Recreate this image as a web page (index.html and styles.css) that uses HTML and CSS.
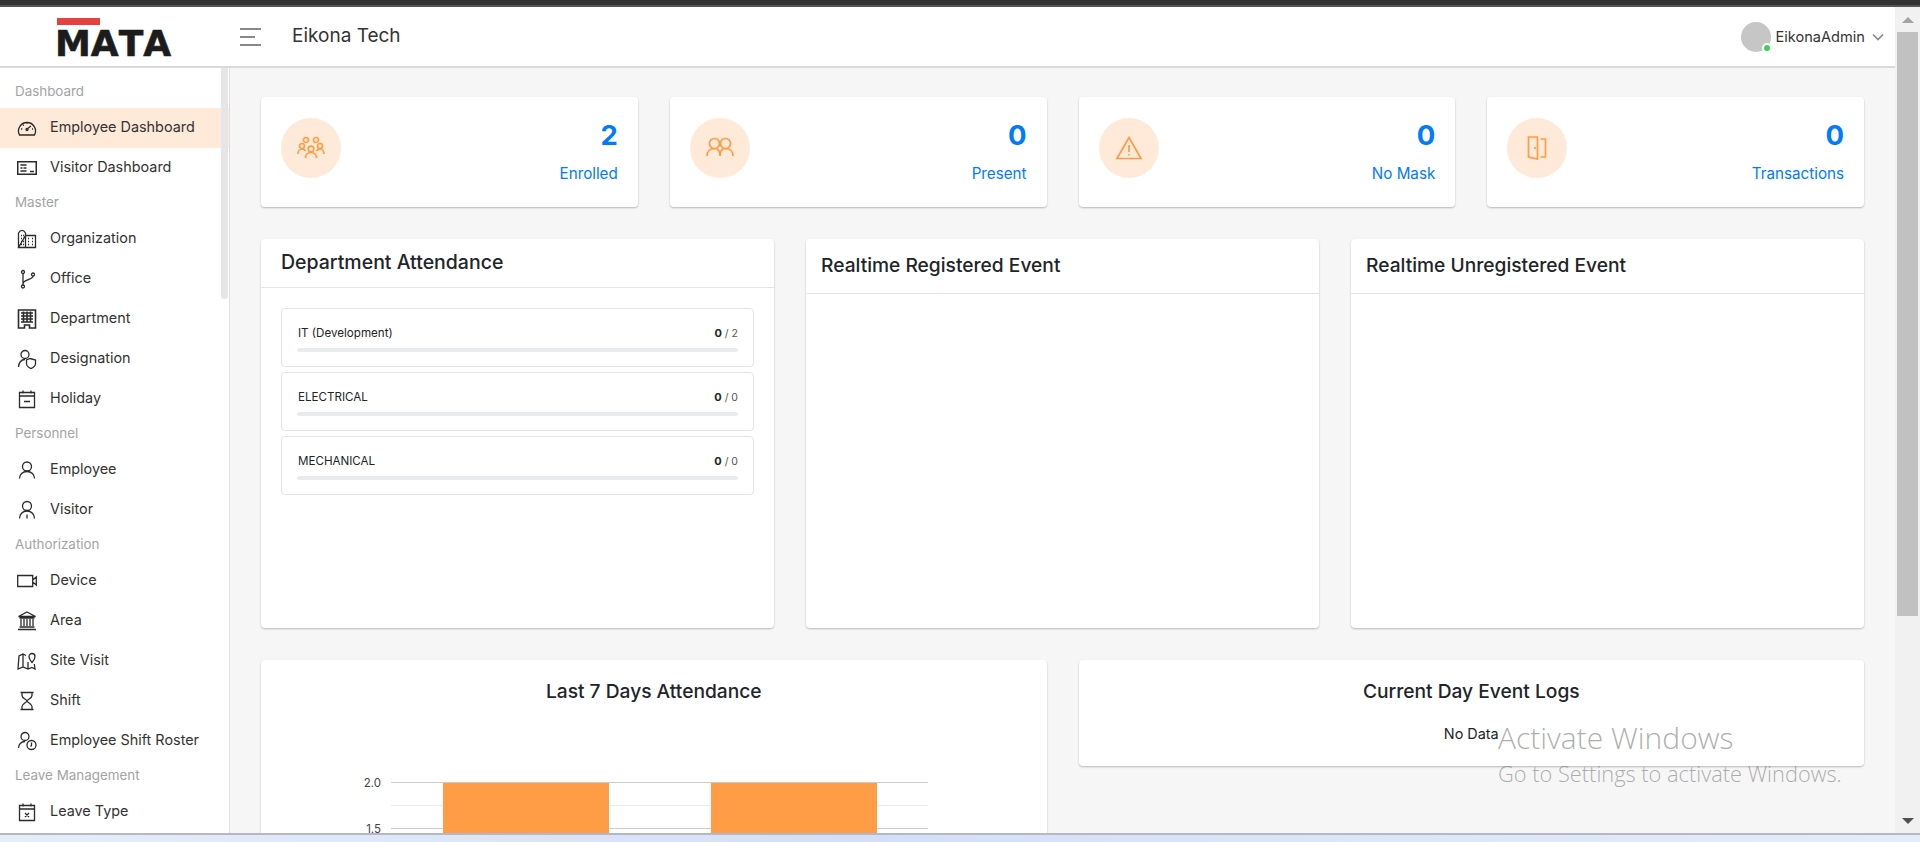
FILE: index.html
```html
<!DOCTYPE html>
<html lang="en">
<head>
    <meta charset="UTF-8">
    <meta name="viewport" content="width=device-width, initial-scale=1.0">
    <title>Eikona Tech</title>
    <link rel="stylesheet" href="styles.css">
</head>
<body>
    <div class="window-top"></div>
    <div class="window">
        <div class="page">
            <header class="topbar">
                <div class="brand">
                    <div class="brand-bar"></div>
                    <div class="brand-name">MATA</div>
                </div>
                <div class="burger"><span></span><span class="short"></span><span></span></div>
                <div class="company">Eikona Tech</div>
                <div class="user">
                    <div class="avatar"><span class="online"></span></div>
                    <span class="user-name">EikonaAdmin</span>
                    <svg class="chevron" viewBox="0 0 12 8"><path d="M1 1.5l5 5 5-5"/></svg>
                </div>
            </header>
            <div class="content">
                <nav class="sidebar">
                    <div class="side-thumb"></div>
                    <div class="side-label">Dashboard</div>
                    <a class="side-item active">
                        <svg class="side-icon" viewBox="0 0 20 20"><path d="M2.500 17a8.500 8.500 0 1 1 15 0zM10 11l4-3M4 11h1.200M6 6.800l.8.8M10 4.500v1.200M15 11h1"/><circle cx="10" cy="11.500" r="1"/></svg>
                        Employee Dashboard
                    </a>
                    <a class="side-item">
                        <svg class="side-icon side-icon-bold" viewBox="0 0 20 20"><path d="M.7 3.700h18.600v12.600H.7zM3.500 7h6M3.500 10h2M6.500 10h3M3.500 13h6M13 13.500h4"/></svg>
                        Visitor Dashboard
                    </a>
                    <div class="side-label">Master</div>
                    <a class="side-item">
                        <svg class="side-icon" viewBox="0 0 20 20"><path d="M1.500 18.500V4c2-3.500 5-3.500 7 0v14.500M8.500 6.500h10v12H1.500zM4 6.500h1M6 6.500h1M4 9.500h1M6 9.500h1M4 12.500h1M6 12.500h1M4 15.500h1M6 15.500h1M11 9.500h1M15 9.500h1M11 12.500h1M15 12.500h1M11 15.500h1M15 15.500h1"/></svg>
                        Organization
                    </a>
                    <a class="side-item">
                        <svg class="side-icon" viewBox="0 0 20 20"><circle cx="6" cy="3" r="1.500"/><circle cx="6" cy="17.500" r="1.500"/><circle cx="16" cy="5.500" r="1.500"/><path d="M6 4.500v11.500M16 7c0 4-10 3.500-10 8"/></svg>
                        Office
                    </a>
                    <a class="side-item">
                        <svg class="side-icon side-icon-bold" viewBox="0 0 20 20"><path d="M1.500 1h17v18h-6v-3h-5v3h-6zM4 4h12M4 7h12M4 10h12M4 13h12M6.500 2.500v11M10 2.500v11M13.500 2.500v11"/></svg>
                        Department
                    </a>
                    <a class="side-item">
                        <svg class="side-icon" viewBox="0 0 20 20"><circle cx="8" cy="5.500" r="4"/><path d="M1.500 18c0-4 2.500-7.500 6.500-7.500M13 9.500l5.500 1.500v3.500c0 2.500-3 4.500-4.500 5-1.500-.5-4.500-2.500-4.500-5V11z"/></svg>
                        Designation
                    </a>
                    <a class="side-item">
                        <svg class="side-icon" viewBox="0 0 20 20"><path d="M2.500 3.500h15v15h-15zM2.500 7h15M6 1.500v3M14 1.500v3M7 12.500h6"/></svg>
                        Holiday
                    </a>
                    <div class="side-label">Personnel</div>
                    <a class="side-item">
                        <svg class="side-icon" viewBox="0 0 20 20"><circle cx="10" cy="6.500" r="4.500"/><path d="M2.500 18.500c0-4 3-7 7.500-7s7.500 3 7.500 7"/></svg>
                        Employee
                    </a>
                    <a class="side-item">
                        <svg class="side-icon" viewBox="0 0 20 20"><circle cx="10" cy="6" r="4.500"/><path d="M2.500 18.500c0-4 3-7.500 7.500-7.500s7.500 3.500 7.500 7.500M10 14.500v4"/></svg>
                        Visitor
                    </a>
                    <div class="side-label">Authorization</div>
                    <a class="side-item">
                        <svg class="side-icon" viewBox="0 0 20 20"><path d="M.7 4.500h15v11H.7zM15.700 9l3.600-3v8l-3.600-3"/></svg>
                        Device
                    </a>
                    <a class="side-item">
                        <svg class="side-icon" viewBox="0 0 20 20"><path d="M10 1l8.500 4.500h-17zM2.500 7h15M4 8v7M7 8v7M10 8v7M13 8v7M16 8v7M2.500 16h15M1 18.500h18"/></svg>
                        Area
                    </a>
                    <a class="side-item">
                        <svg class="side-icon" viewBox="0 0 20 20"><path d="M9 4.500L6 3 2 5 1 18l5-2 5 2 4-1.500 3 1.500-.7-5M6 3v13M11 11v7"/><path d="M15 11.500c-1.500-2-3-3.500-3-6a3 3 0 0 1 6 0c0 2.500-1.500 4-3 6z"/></svg>
                        Site Visit
                    </a>
                    <a class="side-item">
                        <svg class="side-icon" viewBox="0 0 20 20"><path d="M3.500 1.500h13M3.500 18.500h13M5 1.500v3c0 3 5 4 5 5.500s-5 2.500-5 5.500v2.500M15 1.500v3c0 3-5 4-5 5.500s5 2.500 5 5.500v2.500"/></svg>
                        Shift
                    </a>
                    <a class="side-item">
                        <svg class="side-icon" viewBox="0 0 20 20"><circle cx="8" cy="5.500" r="4"/><path d="M1.500 17c0-3.500 2.500-6.500 6.500-6.500"/><circle cx="14.500" cy="14" r="4.500"/><path d="M14.500 11.500v3l-1 1"/></svg>
                        Employee Shift Roster
                    </a>
                    <div class="side-label">Leave Management</div>
                    <a class="side-item">
                        <svg class="side-icon" viewBox="0 0 20 20"><path d="M2.500 3.500h15v15h-15zM2.500 7h15M6 1.500v3M14 1.500v3M8 11l4 4M12 11l-4 4"/></svg>
                        Leave Type
                    </a>
                </nav>
                <main class="main">
                    <section class="stat-row">
                        <div class="card stat">
                            <div class="stat-circle">
                                <svg class="stat-icon" viewBox="0 0 28 24"><circle cx="9" cy="4" r="2.500"/><circle cx="19" cy="4" r="2.500"/><circle cx="5" cy="10" r="2.500"/><circle cx="23" cy="10" r="2.500"/><circle cx="14" cy="13" r="2.800"/><path d="M1 18c0-3 2-5 4-5s3 1 3.500 2M27 18c0-3-2-5-4-5s-3 1-3.500 2M8.500 22c0-3 2-5.500 5.500-5.500s5.500 2.500 5.500 5.500"/></svg>
                            </div>
                            <div class="stat-text"><div class="stat-num">2</div><div class="stat-label">Enrolled</div></div>
                        </div>
                        <div class="card stat">
                            <div class="stat-circle">
                                <svg class="stat-icon" viewBox="0 0 28 24"><circle cx="8.500" cy="7.500" r="5"/><circle cx="19.500" cy="7.500" r="5"/><path d="M1 20c0-4.500 3-7.500 7.500-7.500 3 0 5.500 2.500 5.500 7.500 0-5 2.500-7.500 5.500-7.500 4.500 0 7.500 3 7.500 7.500"/></svg>
                            </div>
                            <div class="stat-text"><div class="stat-num">0</div><div class="stat-label">Present</div></div>
                        </div>
                        <div class="card stat">
                            <div class="stat-circle">
                                <svg class="stat-icon" viewBox="0 0 28 24"><path d="M14 1.500l12 21H2zM14 9v7M14 18v1.500"/></svg>
                            </div>
                            <div class="stat-text"><div class="stat-num">0</div><div class="stat-label">No Mask</div></div>
                        </div>
                        <div class="card stat">
                            <div class="stat-circle">
                                <svg class="stat-icon" viewBox="0 0 28 24"><path d="M5.500 1h9v22l-9-2zM17.500 3h5v18h-5M12 11v2"/></svg>
                            </div>
                            <div class="stat-text"><div class="stat-num">0</div><div class="stat-label">Transactions</div></div>
                        </div>
                    </section>

                    <section class="event-row">
                        <div class="card">
                            <h2 class="card-head dept-head">Department Attendance</h2>
                            <div class="dept-list">
                                <div class="dept">
                                    <div class="dept-line"><span>IT (Development)</span><span class="dept-count"><b>0</b> / 2</span></div>
                                    <div class="dept-bar"></div>
                                </div>
                                <div class="dept">
                                    <div class="dept-line"><span>ELECTRICAL</span><span class="dept-count"><b>0</b> / 0</span></div>
                                    <div class="dept-bar"></div>
                                </div>
                                <div class="dept">
                                    <div class="dept-line"><span>MECHANICAL</span><span class="dept-count"><b>0</b> / 0</span></div>
                                    <div class="dept-bar"></div>
                                </div>
                            </div>
                        </div>
                        <div class="card"><h2 class="card-head event-head">Realtime Registered Event</h2></div>
                        <div class="card"><h2 class="card-head event-head">Realtime Unregistered Event</h2></div>
                    </section>

                    <section class="bottom-row">
                        <div class="card chart-card">
                            <h2 class="center-title">Last 7 Days Attendance</h2>
                            <div class="chart">
                                <div class="tick tick-top">2.0</div>
                                <div class="tick tick-low">1.5</div>
                                <div class="grid-line line-top"></div>
                                <div class="grid-line line-mid"></div>
                                <div class="grid-line line-low"></div>
                                <div class="chart-bar bar-one"></div>
                                <div class="chart-bar bar-two"></div>
                            </div>
                        </div>
                        <div class="card logs-card">
                            <h2 class="center-title">Current Day Event Logs</h2>
                            <div class="no-data">No Data</div>
                        </div>
                    </section>
                </main>
            </div>
        </div>
        <div class="scroll">
            <div class="scroll-up"></div>
            <div class="scroll-thumb"></div>
            <div class="scroll-down"></div>
        </div>
        <div class="watermark">
            <div class="wm-big">Activate Windows</div>
            <div class="wm-small">Go to Settings to activate Windows.</div>
        </div>
    </div>
    <div class="taskbar"></div>
</body>
</html>
```

FILE: styles.css
```css
* {
    box-sizing: border-box;
}
html, body {
    height: 100%;
}
body {
    margin: 0;
    height: 842px;
    overflow: hidden;
    display: flex;
    flex-direction: column;
    font-family: Inter, "Noto Sans", sans-serif;
    color: #212529;
    background-color: #fff;
}
.window-top {
    height: 7px;
    background-color: #333;
    border-bottom: 2px solid #555;
}
.window {
    position: relative;
    flex: 1;
    display: flex;
    min-height: 0;
}
.page {
    flex: 1;
    display: flex;
    flex-direction: column;
    min-width: 0;
}
.taskbar {
    height: 9px;
    border-top: 2px solid #b4b8c6;
    background: linear-gradient(90deg, #e4eef9, #d3dff6 45%, #e3edf9);
}

/* top bar */
.topbar {
    height: 61px;
    display: flex;
    align-items: center;
    border-bottom: 2px solid #d9d9d9;
    background-color: #fff;
}
.brand {
    width: 240px;
    margin-top: 4px;
    padding-left: 55px;
}
.brand-bar {
    width: 43px;
    height: 7px;
    margin-left: 2px;
    margin-bottom: 4px;
    background-color: #e8403f;
}
.brand-name {
    font-family: "DejaVu Sans", sans-serif;
    font-weight: 700;
    font-size: 36px;
    font-kerning: none;
    line-height: 30px;
    color: #1c1c1c;
    -webkit-text-stroke: 0.6px #1c1c1c;
}
.burger {
    width: 21px;
    margin-right: 31px;
    display: flex;
    flex-direction: column;
    gap: 6px;
}
.burger span {
    height: 2px;
    background-color: #888;
}
.burger .short {
    width: 15px;
}
.company {
    font-size: 19px;
    margin-bottom: 3px;
    color: #333;
}
.user {
    margin-left: auto;
    margin-right: 11px;
    display: flex;
    align-items: center;
}
.avatar {
    position: relative;
    width: 30px;
    height: 30px;
    margin-right: 4px;
    border-radius: 50%;
    background-color: #c6c6c6;
}
.online {
    position: absolute;
    right: -1px;
    bottom: -1px;
    width: 10px;
    height: 10px;
    border-radius: 50%;
    border: 2px solid #fff;
    background-color: #3fcf5b;
}
.user-name {
    font-size: 14.6px;
    color: #333;
}
.chevron {
    width: 12px;
    height: 8px;
    margin-left: 7px;
    fill: none;
    stroke: #888;
    stroke-width: 1.6;
}

/* sidebar */
.content {
    flex: 1;
    display: flex;
    min-height: 0;
}
.sidebar {
    position: relative;
    width: 230px;
    flex-shrink: 0;
    padding-top: 9px;
    overflow: hidden;
    border-right: 1px solid #e0e0e0;
    background-color: #fff;
}
.side-thumb {
    position: absolute;
    top: 0;
    right: 1px;
    width: 7px;
    height: 231px;
    border-radius: 0 0 4px 4px;
    background-color: #e6e6e6;
}
.side-label {
    height: 31px;
    padding-left: 15px;
    font-size: 13.4px;
    line-height: 28px;
    color: #a3a3a3;
}
.side-item {
    height: 40px;
    display: flex;
    align-items: center;
    padding-left: 17px;
    padding-bottom: 3px;
    font-size: 14.4px;
    color: #333;
}
.side-item.active {
    background-color: #ffe9d8;
}
.side-icon {
    width: 20px;
    height: 20px;
    margin-top: 3px;
    margin-right: 13px;
    fill: none;
    stroke: #2b2b2b;
    stroke-width: 1.3;
}
.side-icon-bold {
    stroke-width: 1.6;
}

/* main area */
.main {
    flex: 1;
    min-width: 0;
    overflow: hidden;
    padding: 29px 31px 0;
    background-color: #f6f6f6;
}
.card {
    border-radius: 4px;
    background-color: #fff;
    box-shadow: 0 1px 2px rgba(0, 0, 0, 0.25);
}
.stat-row {
    display: grid;
    grid-template-columns: repeat(4, 1fr);
    gap: 32px;
}
.stat {
    height: 110px;
    display: flex;
    justify-content: space-between;
    padding: 21px 20px;
}
.stat-circle {
    width: 60px;
    height: 60px;
    display: flex;
    align-items: center;
    justify-content: center;
    border-radius: 50%;
    background-color: #ffead9;
}
.stat-icon {
    width: 28px;
    height: 24px;
    fill: none;
    stroke: #ff9c45;
    stroke-width: 1.7;
}
.stat-text {
    text-align: right;
    color: #007bff;
}
.stat-num {
    font-size: 27.5px;
    font-weight: 700;
    line-height: 34px;
}
.stat-label {
    margin-top: 10px;
    font-size: 15.2px;
    line-height: 24px;
}

.event-row {
    margin-top: 32px;
    display: grid;
    grid-template-columns: repeat(3, 1fr);
    gap: 32px;
    height: 389px;
}
.card-head {
    margin: 0;
    font-size: 19.2px;
    font-weight: 500;
    color: #212529;
    border-bottom: 1px solid #e4e4e4;
}
.dept-head {
    height: 49px;
    padding: 10px 20px 0;
    font-size: 19.5px;
    line-height: 26px;
}
.event-head {
    height: 55px;
    padding: 13px 15px 0;
    line-height: 26px;
}
.dept-list {
    padding: 20px 20px 0;
    display: flex;
    flex-direction: column;
    gap: 5px;
}
.dept {
    height: 59px;
    padding: 15px 15px 0;
    border: 1px solid #e4e4e4;
    border-radius: 4px;
}
.dept-line {
    display: flex;
    justify-content: space-between;
    padding-left: 1px;
    font-size: 11.6px;
    line-height: 18px;
    color: #212529;
}
.dept-count {
    font-size: 10.5px;
    color: #555;
}
.dept-count b {
    font-size: 11px;
    color: #212529;
}
.dept-bar {
    height: 4px;
    margin-top: 5px;
    border-radius: 2px;
    background-color: #e9ecef;
}

.bottom-row {
    margin-top: 32px;
    display: grid;
    grid-template-columns: repeat(2, 1fr);
    gap: 32px;
    align-items: start;
}
.center-title {
    margin: 0;
    padding-top: 18px;
    font-size: 19.2px;
    font-weight: 500;
    line-height: 26px;
    text-align: center;
    color: #212529;
}
.chart-card {
    height: 300px;
}
.logs-card {
    height: 106px;
}
.no-data {
    margin-top: 20px;
    font-size: 14.4px;
    line-height: 20px;
    text-align: center;
    color: #212529;
}

/* chart parts sit at their plot coordinates */
.chart {
    position: relative;
    height: 250px;
}
.grid-line {
    position: absolute;
    left: 130px;
    width: 537px;
    height: 1px;
    background-color: #ccc;
}
.line-top { top: 78px; }
.line-mid { top: 101px; background-color: #ebebeb; }
.line-low { top: 124px; }
.tick {
    position: absolute;
    left: 90px;
    width: 30px;
    text-align: right;
    font-size: 11.5px;
    line-height: 14px;
    color: #444;
}
.tick-top { top: 72px; }
.tick-low { top: 118px; }
.chart-bar {
    position: absolute;
    top: 79px;
    width: 166px;
    height: 160px;
    background-color: #ff9c45;
}
.bar-one { left: 182px; }
.bar-two { left: 450px; }

/* browser scrollbar */
.scroll {
    position: relative;
    width: 25px;
    flex-shrink: 0;
    background-color: #f1f1f1;
}
.scroll-thumb {
    position: absolute;
    top: 25px;
    left: 2px;
    width: 21px;
    height: 584px;
    background-color: #c1c1c1;
}
.scroll-up, .scroll-down {
    position: absolute;
    left: 7px;
    width: 0;
    height: 0;
    border-left: 6px solid transparent;
    border-right: 6px solid transparent;
}
.scroll-up {
    top: 10px;
    border-bottom: 6px solid #a3a3a3;
}
.scroll-down {
    bottom: 9px;
    border-top: 6px solid #505050;
}

/* windows activation text */
.watermark {
    position: absolute;
    left: 1498px;
    top: 711px;
    font-family: "Open Sans", sans-serif;
    font-weight: 300;
    color: rgba(120, 120, 120, 0.6);
    pointer-events: none;
}
.wm-big {
    font-size: 30px;
    line-height: 40px;
}
.wm-small {
    margin-top: 2px;
    font-size: 21.8px;
    line-height: 28px;
}
```
